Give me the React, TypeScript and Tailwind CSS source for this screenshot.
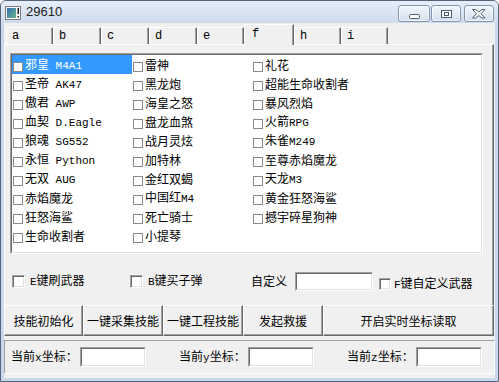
import React from 'react';

const col1 = ['邪皇 M4A1', '圣帝 AK47', '傲君 AWP', '血契 D.Eagle', '狼魂 SG552', '永恒 Python', '无双 AUG', '赤焰魔龙', '狂怒海鲨', '生命收割者'];
const col2 = ['雷神', '黑龙炮', '海皇之怒', '盘龙血煞', '战月灵炫', '加特林', '金红双蝎', '中国红M4', '死亡骑士', '小提琴'];
const col3 = ['礼花', '超能生命收割者', '暴风烈焰', '火箭RPG', '朱雀M249', '至尊赤焰魔龙', '天龙M3', '黄金狂怒海鲨', '撼宇碎星狗神'];
const items = [...col1, ...col2, ...col3];

const tabs = [
  { t: 'a', w: 'w-[47px]' },
  { t: 'b', w: 'w-[48px]' },
  { t: 'c', w: 'w-[48px]' },
  { t: 'd', w: 'w-[48px]' },
  { t: 'e', w: 'w-[47px]' },
  { t: 'f', w: 'w-[50px]', sel: true },
  { t: 'h', w: 'w-[47px]' },
  { t: 'i', w: 'w-[47px]' },
];

const buttons = [
  { t: '技能初始化', w: 'w-[79px]' },
  { t: '一键采集技能', w: 'w-[80px]' },
  { t: '一键工程技能', w: 'w-[80px]' },
  { t: '发起救援', w: 'w-[80px]' },
  { t: '开启实时坐标读取', w: 'w-[171px]' },
];

// ascii runs get the narrow mono face, like the half-width glyphs of the original
const Txt = ({ t }: { t: string }) => (
  <>
    {t
      .split(/([\x20-\x7e]+)/)
      .filter(Boolean)
      .map((p, i) =>
        /^[\x20-\x7e]+$/.test(p) ? (
          <span key={i} className="whitespace-pre font-['Liberation_Mono',monospace] text-[11px]">
            {p}
          </span>
        ) : (
          <span key={i}>{p}</span>
        ),
      )}
  </>
);

const Sunken = ({ className, children }: { className: string; children?: React.ReactNode }) => (
  <div className={`border border-t-[#a0a0a0] border-l-[#a0a0a0] border-b-white border-r-white ${className}`}>
    <div className="w-full h-full border border-t-[#696969] border-l-[#696969] border-b-[#e3e3e3] border-r-[#e3e3e3] bg-white">
      {children}
    </div>
  </div>
);

const Check = ({ size = 'w-[13px] h-[13px]' }: { size?: string }) => (
  <div className={`${size} shrink-0 bg-white border border-t-[#a0a0a0] border-l-[#a0a0a0] border-b-white border-r-white shadow-[inset_1px_1px_0_#696969,inset_-1px_-1px_0_#e3e3e3]`} />
);

const CapBtn = ({ w, children }: { w: string; children: React.ReactNode }) => (
  <div className={`${w} h-[17px] rounded-[3px] border border-[#8396ae] bg-gradient-to-b from-[#f3f7fc] to-[#d3dfee] shadow-[inset_0_0_0_1px_#ffffffaa] flex items-center justify-center`}>
    {children}
  </div>
);

export default function App() {
  return (
    <div className="w-[499px] h-[382px] flex flex-col border border-[#56657a] rounded-t-[6px] bg-[#c9d8eb] overflow-hidden font-['Noto_Sans_CJK_SC',sans-serif] text-[12px] text-black">
      {/* title bar */}
      <div className="h-[22px] shrink-0 flex items-start bg-gradient-to-b from-[#e6eef8] to-[#cddbed]">
        <svg width="16" height="14" viewBox="0 0 16 14" className="ml-[4px] mt-[5px]">
          <defs>
            <linearGradient id="ig" x1="0" y1="0" x2="1" y2="1">
              <stop offset="0" stopColor="#2f6fb3" />
              <stop offset="1" stopColor="#6cb48c" />
            </linearGradient>
          </defs>
          <rect x="0.5" y="0.5" width="15" height="13" fill="#f6f6f6" stroke="#7d7d7d" />
          <rect x="2" y="2" width="9" height="10" fill="url(#ig)" />
          <rect x="12.5" y="2" width="1.5" height="6" fill="#222" />
          <rect x="12.5" y="10" width="1.5" height="1.5" fill="#222" />
        </svg>
        <span className="ml-[5px] mt-[3px] font-['Liberation_Sans',sans-serif] text-[13px] text-[#222] leading-[16px]">29610</span>
        <div className="ml-auto mr-[4px] mt-[4px] flex">
          <CapBtn w="w-[32px]">
            <svg width="11" height="5" className="mt-[5px]">
              <rect x="0.5" y="0.5" width="10" height="4" rx="1" fill="#fff" stroke="#4f5c6d" />
            </svg>
          </CapBtn>
          <div className="ml-[1px]">
            <CapBtn w="w-[30px]">
              <svg width="11" height="8">
                <rect x="0.5" y="0.5" width="10" height="7" fill="#fff" stroke="#4f5c6d" />
                <rect x="3.5" y="2.5" width="4" height="3" fill="none" stroke="#4f5c6d" />
              </svg>
            </CapBtn>
          </div>
          <div className="ml-[3px]">
            <CapBtn w="w-[30px]">
              <svg width="14" height="10">
                <polygon
                  points="0.5,0.5 3.5,0.5 6.75,3 10,0.5 13,0.5 9,4.75 13,9 10,9 6.75,6.5 3.5,9 0.5,9 4.5,4.75"
                  fill="#fff"
                  stroke="#4f5c6d"
                  strokeLinejoin="round"
                />
              </svg>
            </CapBtn>
          </div>
        </div>
      </div>

      {/* client area */}
      <div className="mx-[3px] h-[355px] shrink-0 bg-[#f0f0f0] flex flex-col pt-[4px]">
        {/* tab strip */}
        <div className="h-[17px] flex items-end pl-[2px]">
          {tabs.map((tab) =>
            tab.sel ? (
              <div
                key={tab.t}
                className={`${tab.w} h-[21px] mb-[-1px] relative z-10 bg-[#f0f0f0] border-t border-l border-white border-r border-r-[#696969] shadow-[inset_-1px_0_0_#a0a0a0] pl-[7px] pt-[1px] font-['Liberation_Mono',monospace] text-[12px] leading-[16px]`}
              >
                {tab.t}
              </div>
            ) : (
              <div
                key={tab.t}
                className={`${tab.w} h-[17px] border-t border-l border-white border-r border-r-[#696969] shadow-[inset_-1px_0_0_#a0a0a0] pl-[5px] pt-[1px] font-['Liberation_Mono',monospace] text-[12px] leading-[15px]`}
              >
                {tab.t}
              </div>
            ),
          )}
        </div>

        {/* tab page */}
        <div className="w-[490px] h-[261px] shrink-0 border-t border-l border-white border-r border-r-[#696969] shadow-[inset_-1px_0_0_#a0a0a0] flex flex-col">
          <Sunken className="ml-[5px] mt-[8px] w-[473px] h-[201px] shrink-0">
            <div className="grid grid-flow-col grid-rows-[repeat(10,19px)] auto-cols-[120px]">
              {items.map((it, i) => (
                <div
                  key={it}
                  className={`flex items-center h-[19px] leading-[19px] whitespace-nowrap ${i === 0 ? 'bg-[#3399ff] text-white' : ''}`}
                >
                  <span className="ml-[1px] mt-[4px] w-[10px] h-[10px] shrink-0 border border-[#8a8a8a] bg-white" />
                  <span className="ml-[2px]">
                    <Txt t={it} />
                  </span>
                </div>
              ))}
            </div>
          </Sunken>

          <div className="mt-[17px] h-[20px] flex items-center pl-[7px]">
            <div className="w-[118px] flex items-center">
              <Check />
              <span className="ml-[5px]">
                <Txt t="E键刷武器" />
              </span>
            </div>
            <div className="w-[121px] flex items-center">
              <Check />
              <span className="ml-[5px]">
                <Txt t="B键买子弹" />
              </span>
            </div>
            <span className="w-[44px]">自定义</span>
            <Sunken className="w-[78px] h-[19px] shrink-0" />
            <div className="ml-[6px] mt-[5px] flex items-center">
              <Check size="w-[12px] h-[12px]" />
              <span className="ml-[3px]">
                <Txt t="F键自定义武器" />
              </span>
            </div>
          </div>
        </div>

        {/* buttons */}
        <div className="flex h-[31px] shrink-0">
          {buttons.map((b) => (
            <div
              key={b.t}
              className={`${b.w} h-full flex items-center justify-center border border-t-white border-l-white border-b-[#696969] border-r-[#696969] shadow-[inset_-1px_-1px_0_#a0a0a0]`}
            >
              {b.t}
            </div>
          ))}
        </div>

        {/* coordinates */}
        <div className="mt-[4px] h-[34px] shrink-0 flex items-center pl-[6px] border border-t-[#a0a0a0] border-l-[#a0a0a0] border-b-white border-r-white">
          {['x', 'y', 'z'].map((c, i) => (
            <div key={c} className={`flex items-center ${i > 0 ? 'ml-[33px]' : ''}`}>
              <span className="w-[69px]">
                <Txt t={`当前${c}坐标：`} />
              </span>
              <Sunken className="w-[66px] h-[20px] shrink-0" />
            </div>
          ))}
        </div>
      </div>
    </div>
  );
}
